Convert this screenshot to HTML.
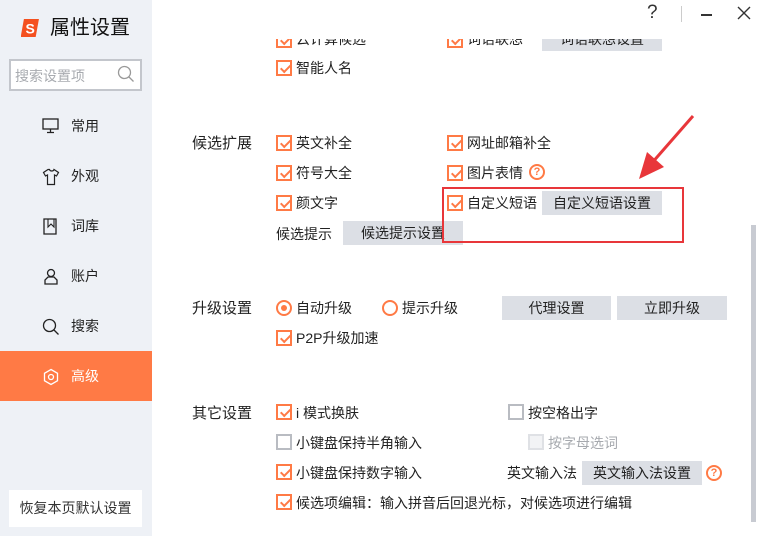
<!DOCTYPE html>
<html><head><meta charset="utf-8"><style>
*{margin:0;padding:0;box-sizing:border-box}
body{width:769px;height:536px;overflow:hidden;background:#fff;position:relative;font-family:"Liberation Sans","Noto Sans CJK SC",sans-serif;font-size:14px;color:#222}
.a{position:absolute;white-space:nowrap}
#side{position:absolute;left:0;top:0;width:152px;height:536px;background:#eef1f6}
.nav{position:absolute;left:0;width:152px;height:50px;line-height:50px}
.nav span{position:absolute;left:71px;font-size:14px}
.nav svg{position:absolute;left:42px;top:17px}
.cb{position:absolute;width:16px;height:16px;border:2px solid #ff7a45;background:#fff}
.cb::after{content:"";position:absolute;left:2px;width:8px;height:4px;border-left:2px solid #ff7a45;border-bottom:2px solid #ff7a45;transform:rotate(-45deg);transform-origin:0 0;top:7px}
.cb.off{border-color:#b9bcc2}.cb.off::after{display:none}
.cb.dis{border-color:#dfe1e5;background:#f2f3f5}.cb.dis::after{display:none}
.t{position:absolute;white-space:nowrap;line-height:16px}
.btn{position:absolute;background:#dcdfe5;text-align:center;line-height:24px;height:24px}
.rd{position:absolute;width:16px;height:16px;border:2px solid #ff7a45;border-radius:50%;background:#fff}
.rd.on::after{content:"";position:absolute;left:3px;top:3px;width:6px;height:6px;border-radius:50%;background:#ff7a45}
.q{position:absolute;width:16px;height:16px;border:2px solid #ff7a45;border-radius:50%;color:#ff7a45;font-size:11px;font-weight:bold;text-align:center;line-height:12px}
.lbl{position:absolute;font-size:15px;line-height:18px}
</style></head><body>
<div id="side">
<svg class="a" style="left:21px;top:18px" width="20" height="20" viewBox="0 0 20 20"><path d="M3 1h15l-2 18H1z" fill="#f4501f" transform="skewX(-4)"/><text x="4.5" y="15.5" font-size="14" font-weight="bold" fill="#fff" font-family="Liberation Sans">S</text></svg>
<div class="a" style="left:50px;top:15px;font-size:20px;line-height:26px;color:#111">属性设置</div>
<div class="a" style="left:9px;top:59px;width:133px;height:32px;border:2px solid #c3c6cc;background:#fff"></div>
<div class="a" style="left:15px;top:66px;color:#a8abb0;font-size:14px">搜索设置项</div>
<svg class="a" style="left:117px;top:65px" width="18" height="18"><circle cx="7.5" cy="7.5" r="6" fill="none" stroke="#999" stroke-width="1.3"/><path d="M12 12l4.5 4.5" stroke="#999" stroke-width="1.3"/></svg>
<div class="nav" style="top:101px"><svg width="18" height="16"><rect x="1" y="1" width="15" height="10" fill="none" stroke="#222" stroke-width="1.3"/><path d="M8.5 11v3M5 14.5h7" stroke="#222" stroke-width="1.3"/></svg><span>常用</span></div>
<div class="nav" style="top:151px"><svg width="18" height="18"><path d="M6 1.5L1.5 4.5 3.5 8l2-1v9.5h7V7l2 1 2-3.5-4.5-3c-.5 2-4 2-4.5 0z" fill="none" stroke="#222" stroke-width="1.2"/></svg><span>外观</span></div>
<div class="nav" style="top:201px"><svg width="18" height="18"><path d="M2 1h12v15H2z" fill="none" stroke="#222" stroke-width="1.3"/><path d="M6 1v8l3-3 3 3V1" fill="none" stroke="#222" stroke-width="1.1"/></svg><span>词库</span></div>
<div class="nav" style="top:251px"><svg width="18" height="18"><circle cx="9" cy="5" r="3.5" fill="none" stroke="#222" stroke-width="1.3"/><path d="M3 16v-4l3-3h6l3 3v4z" fill="none" stroke="#222" stroke-width="1.3"/></svg><span>账户</span></div>
<div class="nav" style="top:301px"><svg width="18" height="18"><circle cx="7.5" cy="7.5" r="6" fill="none" stroke="#222" stroke-width="1.3"/><path d="M12 12l4.5 4.5" stroke="#222" stroke-width="1.3"/></svg><span>搜索</span></div>
<div class="nav" style="top:351px;background:#ff7a45;color:#fff"><svg width="18" height="18"><path d="M9 1.5l6.5 3.75v7.5L9 16.5 2.5 12.75v-7.5z" fill="none" stroke="#fff" stroke-width="1.3"/><circle cx="9" cy="9" r="2.5" fill="none" stroke="#fff" stroke-width="1.3"/></svg><span>高级</span></div>
<div class="a" style="left:9px;top:490px;width:133px;height:37px;background:#fff;line-height:37px;text-align:center;color:#333">恢复本页默认设置</div>
</div>

<div class="cb" style="left:276px;top:32px"></div><div class="t" style="left:296px;top:31px">云计算候选</div>
<div class="cb" style="left:447px;top:32px"></div><div class="t" style="left:467px;top:31px">词语联想</div>
<div class="btn" style="left:542px;top:27px;width:120px">词语联想设置</div>
<div class="a" style="left:152px;top:0;width:617px;height:39px;background:#fff"></div>
<div class="a" style="left:647px;top:2px;font-size:19px;color:#333">?</div>
<div class="a" style="left:681px;top:6px;width:1px;height:16px;background:#ccc"></div>
<div class="a" style="left:701px;top:14px;width:11px;height:1.5px;background:#333"></div>
<svg class="a" style="left:737px;top:6px" width="14" height="14"><path d="M1 1l12 12M13 1L1 13" stroke="#333" stroke-width="1.4"/></svg>

<div class="cb" style="left:276px;top:60px"></div><div class="t" style="left:296px;top:60px">智能人名</div>

<div class="lbl" style="left:192px;top:135px">候选扩展</div>
<div class="cb" style="left:276px;top:135px"></div><div class="t" style="left:296px;top:135px">英文补全</div>
<div class="cb" style="left:447px;top:135px"></div><div class="t" style="left:467px;top:135px">网址邮箱补全</div>
<div class="cb" style="left:276px;top:165px"></div><div class="t" style="left:296px;top:165px">符号大全</div>
<div class="cb" style="left:447px;top:165px"></div><div class="t" style="left:467px;top:165px">图片表情</div>
<div class="q" style="left:529px;top:164px">?</div>
<div class="cb" style="left:276px;top:195px"></div><div class="t" style="left:296px;top:195px">颜文字</div>
<div class="cb" style="left:447px;top:195px"></div><div class="t" style="left:467px;top:195px">自定义短语</div>
<div class="btn" style="left:542px;top:191px;width:120px">自定义短语设置</div>
<div class="t" style="left:276px;top:226px">候选提示</div>
<div class="btn" style="left:343px;top:221px;width:120px">候选提示设置</div>
<div class="a" style="left:442px;top:187px;width:242px;height:56px;border:2px solid #e8363a"></div>
<svg class="a" style="left:635px;top:112px" width="62" height="72"><path d="M58 4L16 52" stroke="#e8363a" stroke-width="3"/><path d="M4 67l8-27 17 15z" fill="#e8363a"/></svg>

<div class="lbl" style="left:192px;top:300px">升级设置</div>
<div class="rd on" style="left:276px;top:300px"></div><div class="t" style="left:296px;top:300px">自动升级</div>
<div class="rd" style="left:382px;top:300px"></div><div class="t" style="left:402px;top:300px">提示升级</div>
<div class="btn" style="left:502px;top:296px;width:109px">代理设置</div>
<div class="btn" style="left:617px;top:296px;width:110px">立即升级</div>
<div class="cb" style="left:276px;top:330px"></div><div class="t" style="left:296px;top:330px">P2P升级加速</div>

<div class="lbl" style="left:192px;top:405px">其它设置</div>
<div class="cb" style="left:276px;top:404px"></div><div class="t" style="left:296px;top:405px">i 模式换肤</div>
<div class="cb off" style="left:508px;top:404px"></div><div class="t" style="left:528px;top:405px">按空格出字</div>
<div class="cb off" style="left:276px;top:434px"></div><div class="t" style="left:296px;top:435px">小键盘保持半角输入</div>
<div class="cb dis" style="left:528px;top:434px"></div><div class="t" style="left:548px;top:435px;color:#a6a9ae">按字母选词</div>
<div class="cb" style="left:276px;top:464px"></div><div class="t" style="left:296px;top:465px">小键盘保持数字输入</div>
<div class="t" style="left:507px;top:465px">英文输入法</div>
<div class="btn" style="left:582px;top:461px;width:120px">英文输入法设置</div>
<div class="q" style="left:706px;top:465px">?</div>
<div class="cb" style="left:276px;top:494px"></div><div class="t" style="left:296px;top:495px">候选项编辑：输入拼音后回退光标，对候选项进行编辑</div>

<div class="a" style="left:751px;top:225px;width:5px;height:297px;background:#c8cbd2"></div>
</body></html>
